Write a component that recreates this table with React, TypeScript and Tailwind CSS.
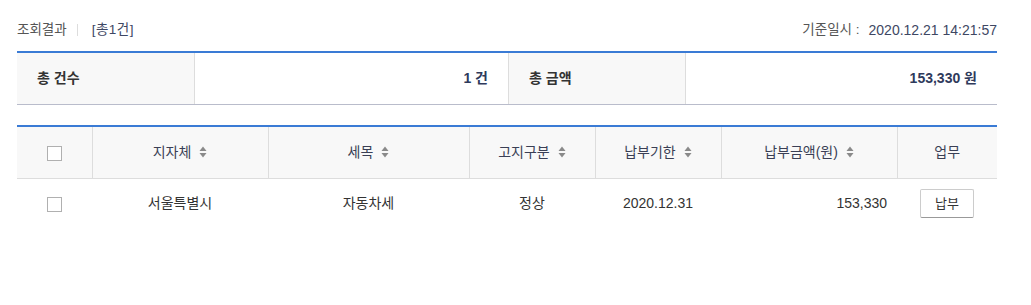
import React from 'react';

const font = { fontFamily: '"Liberation Sans", "Noto Sans CJK KR", sans-serif' };

function SortIcon() {
  return <svg width="8" height="12" viewBox="0 0 8 12" className="inline-block ml-2 -mt-0.5 align-middle">
      <path d="M4 0.5 L7.5 5 L0.5 5 Z" fill="#8a8a8a" />
      <path d="M0.5 7 L7.5 7 L4 11.5 Z" fill="#8a8a8a" />
    </svg>;
}

function Checkbox() {
  return <span className="inline-block w-[15px] h-[15px] border border-[#b0b0b0] bg-white align-middle" />;
}

export default function App() {
  const columns = [{
    label: '지자체',
    width: 'w-[176px]',
    sort: true
  }, {
    label: '세목',
    width: 'w-[201px]',
    sort: true
  }, {
    label: '고지구분',
    width: 'w-[126px]',
    sort: true
  }, {
    label: '납부기한',
    width: 'w-[126px]',
    sort: true
  }, {
    label: '납부금액(원)',
    width: 'w-[176px]',
    sort: true
  }, {
    label: '업무',
    width: 'w-[100px]',
    sort: false
  }];
  return <div className="w-[1031px] h-[305px] bg-white px-[17px] pt-[20px]" style={font}>
      {/* 조회 정보 */}
      <div className="w-[980px] flex items-center justify-between h-[20px] text-[13.5px]">
        <div className="flex items-center text-[#555]">
          <span>조회결과</span>
          <span className="ml-[10px] mr-[14px] w-px h-[12px] bg-[#dddddd]" />
          <span className="text-[#3e4763] tracking-[0.5px]">[총1건]</span>
        </div>
        <div className="flex items-center">
          <span className="text-[#555]">기준일시 :</span>
          <span className="ml-[9px] text-[#3e4763] text-[14px]">2020.12.21 14:21:57</span>
        </div>
      </div>

      {/* 합계 */}
      <div className="mt-[11px] w-[980px] border-t-2 border-[#3a7bd5] border-b border-b-[#b9bccb] flex h-[54px] text-[14px] font-bold">
        <div className="w-[177px] bg-[#f8f8f8] flex items-center pl-[20px] text-[#333]">총 건수</div>
        <div className="w-[314px] border-l border-[#dddddd] flex items-center justify-end pr-[20px] text-[#2f3a5c]">1 건</div>
        <div className="w-[177px] border-l border-[#dddddd] bg-[#f8f8f8] flex items-center pl-[20px] text-[#333]">총 금액</div>
        <div className="flex-1 border-l border-[#dddddd] flex items-center justify-end pr-[20px] text-[#2f3a5c]">153,330 원</div>
      </div>

      {/* 목록 */}
      <table className="mt-[20px] w-[980px] border-collapse table-fixed text-[14px] text-[#333]">
        <thead>
          <tr className="h-[52px] bg-[#f8f8f8] border-t-2 border-[#3a7bd5] border-b border-b-[#dddddd]">
            <th className="w-[75px] font-normal text-center"><Checkbox /></th>
            {columns.map((col, i) => <th key={i} className={`${col.width} font-normal text-center border-l border-[#dddddd] text-[#3a3f55]`}>
                {col.label}
                {col.sort && <SortIcon />}
              </th>)}
          </tr>
        </thead>
        <tbody>
          <tr className="h-[51px]">
            <td className="text-center"><Checkbox /></td>
            <td className="text-center">서울특별시</td>
            <td className="text-center">자동차세</td>
            <td className="text-center">정상</td>
            <td className="text-center">2020.12.31</td>
            <td className="text-right pr-[10px]">153,330</td>
            <td className="text-center">
              <button className="w-[54px] h-[29px] bg-white border border-[#cccccc] border-b-[#999] rounded-[2px] text-[13px] text-[#333]">납부</button>
            </td>
          </tr>
        </tbody>
      </table>
    </div>;
}
